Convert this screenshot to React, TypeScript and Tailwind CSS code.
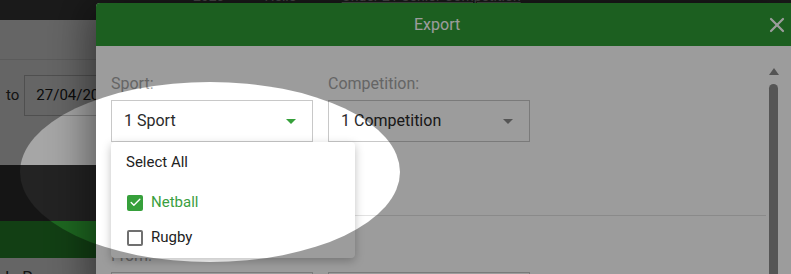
import { Check, X } from "lucide-react";

const labelCls = "block h-[22px] text-[16px] leading-[22px] text-[#a6a6a6]";
const selectCls =
  "flex h-[42px] w-[202px] items-center justify-between border border-[#c8c8c8] bg-white pl-[12px] pr-[16px] text-[16px] text-[#2a2a2a]";

function Caret({ color }: { color: string }) {
  return (
    <svg width="10" height="5" viewBox="0 0 10 5">
      <path d="M0 0h10L5 5z" fill={color} />
    </svg>
  );
}

function Page() {
  return (
    <div className="bg-white">
      <div className="flex h-[20px] items-start overflow-hidden bg-[#444] text-[14px] leading-[14px] text-[#b8b8b8]">
        <span className="-mt-[11px] ml-[193px]">2023</span>
        <span className="-mt-[11px] ml-[40px]">Hello</span>
        <span className="-mt-[11px] ml-[45px] underline">Under 21 Senior Competition</span>
      </div>
      <div className="h-[40px] border-b border-[#e6e6e6]" />
      <div className="mt-[15px] flex items-center">
        <span className="ml-[6px] text-[15px] text-[#333]">to</span>
        <div className="ml-[5px] flex h-[41px] w-[200px] items-center border border-[#c8c8c8] pl-[11px] text-[15px] text-[#222]">
          27/04/2023
        </div>
      </div>
      <div className="mt-[49px] h-[56px] bg-[#363636]" />
      <div className="h-[37px] bg-[#2ea034]" />
      <div className="mt-[8px] pl-[5px] text-[16px] text-[#333]">In Progress</div>
    </div>
  );
}

function SportDropdown() {
  return (
    <div className="absolute left-[15px] top-[96px] h-[116px] w-[244px] rounded bg-white pt-[8px] shadow-[0_3px_10px_rgba(0,0,0,0.25)]">
      <div className="flex h-[24px] items-center pl-[15px] text-[15px] text-[#222]">Select All</div>
      <div className="mt-[11px] flex h-[35px] items-center gap-[8px] pl-[16px] text-[15px] text-[#3aa03f]">
        <span className="flex h-[16px] w-[16px] items-center justify-center rounded-[2px] bg-[#36a03b]">
          <Check size={13} strokeWidth={2.5} color="white" />
        </span>
        Netball
      </div>
      <div className="flex h-[35px] items-center gap-[8px] pl-[16px] text-[15px] text-[#222]">
        <span className="h-[16px] w-[16px] rounded-[2px] border-2 border-[#707070]" />
        Rugby
      </div>
    </div>
  );
}

function ExportModal() {
  return (
    <div className="absolute left-[96px] top-[3px] h-[300px] w-[700px] rounded-tl bg-white shadow-[-8px_0_40px_rgba(0,0,0,0.45)]">
      <div className="flex h-[43px] items-center rounded-tl bg-[#2f9c35] text-white">
        <span className="pl-[318px] text-[16px]">Export</span>
        <X size={24} strokeWidth={2.2} className="ml-auto mr-[7px]" />
      </div>
      <div className="flex">
        <div className="relative w-[670px] pl-[15px] pt-[27px]">
          <div className="flex gap-[15px]">
            <div>
              <span className={labelCls}>Sport:</span>
              <div className={`mt-[5px] ${selectCls}`}>
                1 Sport
                <Caret color="#36a03b" />
              </div>
            </div>
            <div>
              <span className={labelCls}>Competition:</span>
              <div className={`mt-[5px] ${selectCls}`}>
                1 Competition
                <Caret color="#8c8c8c" />
              </div>
            </div>
          </div>
          <div className="mt-[73px] h-px bg-[#e2e2e2]" />
          <span className={`mt-[29px] ${labelCls}`}>From:</span>
          <div className="mt-[5px] flex gap-[15px]">
            <div className="h-[42px] w-[202px] border border-[#c8c8c8]" />
            <div className="h-[42px] w-[202px] border border-[#c8c8c8]" />
          </div>
          <SportDropdown />
        </div>
        <div className="mt-[16px] flex w-[15px] flex-col items-center pt-[6px]">
          <svg width="10" height="7" viewBox="0 0 10 7">
            <path d="M5 0l5 7H0z" fill="#8a8a8a" />
          </svg>
          <div className="mt-[9px] h-[220px] w-[9px] rounded-full bg-[#8b8b8b]" />
        </div>
      </div>
    </div>
  );
}

export default function App() {
  return (
    <div className="relative h-[274px] w-[791px] overflow-hidden font-['Roboto',sans-serif]">
      <Page />
      <div className="absolute inset-0 bg-black/35" />
      <ExportModal />
      <div className="pointer-events-none absolute left-[20px] top-[82px] h-[180px] w-[380px] rounded-[50%] shadow-[0_0_0_2000px_rgba(0,0,0,0.39)]" />
    </div>
  );
}
